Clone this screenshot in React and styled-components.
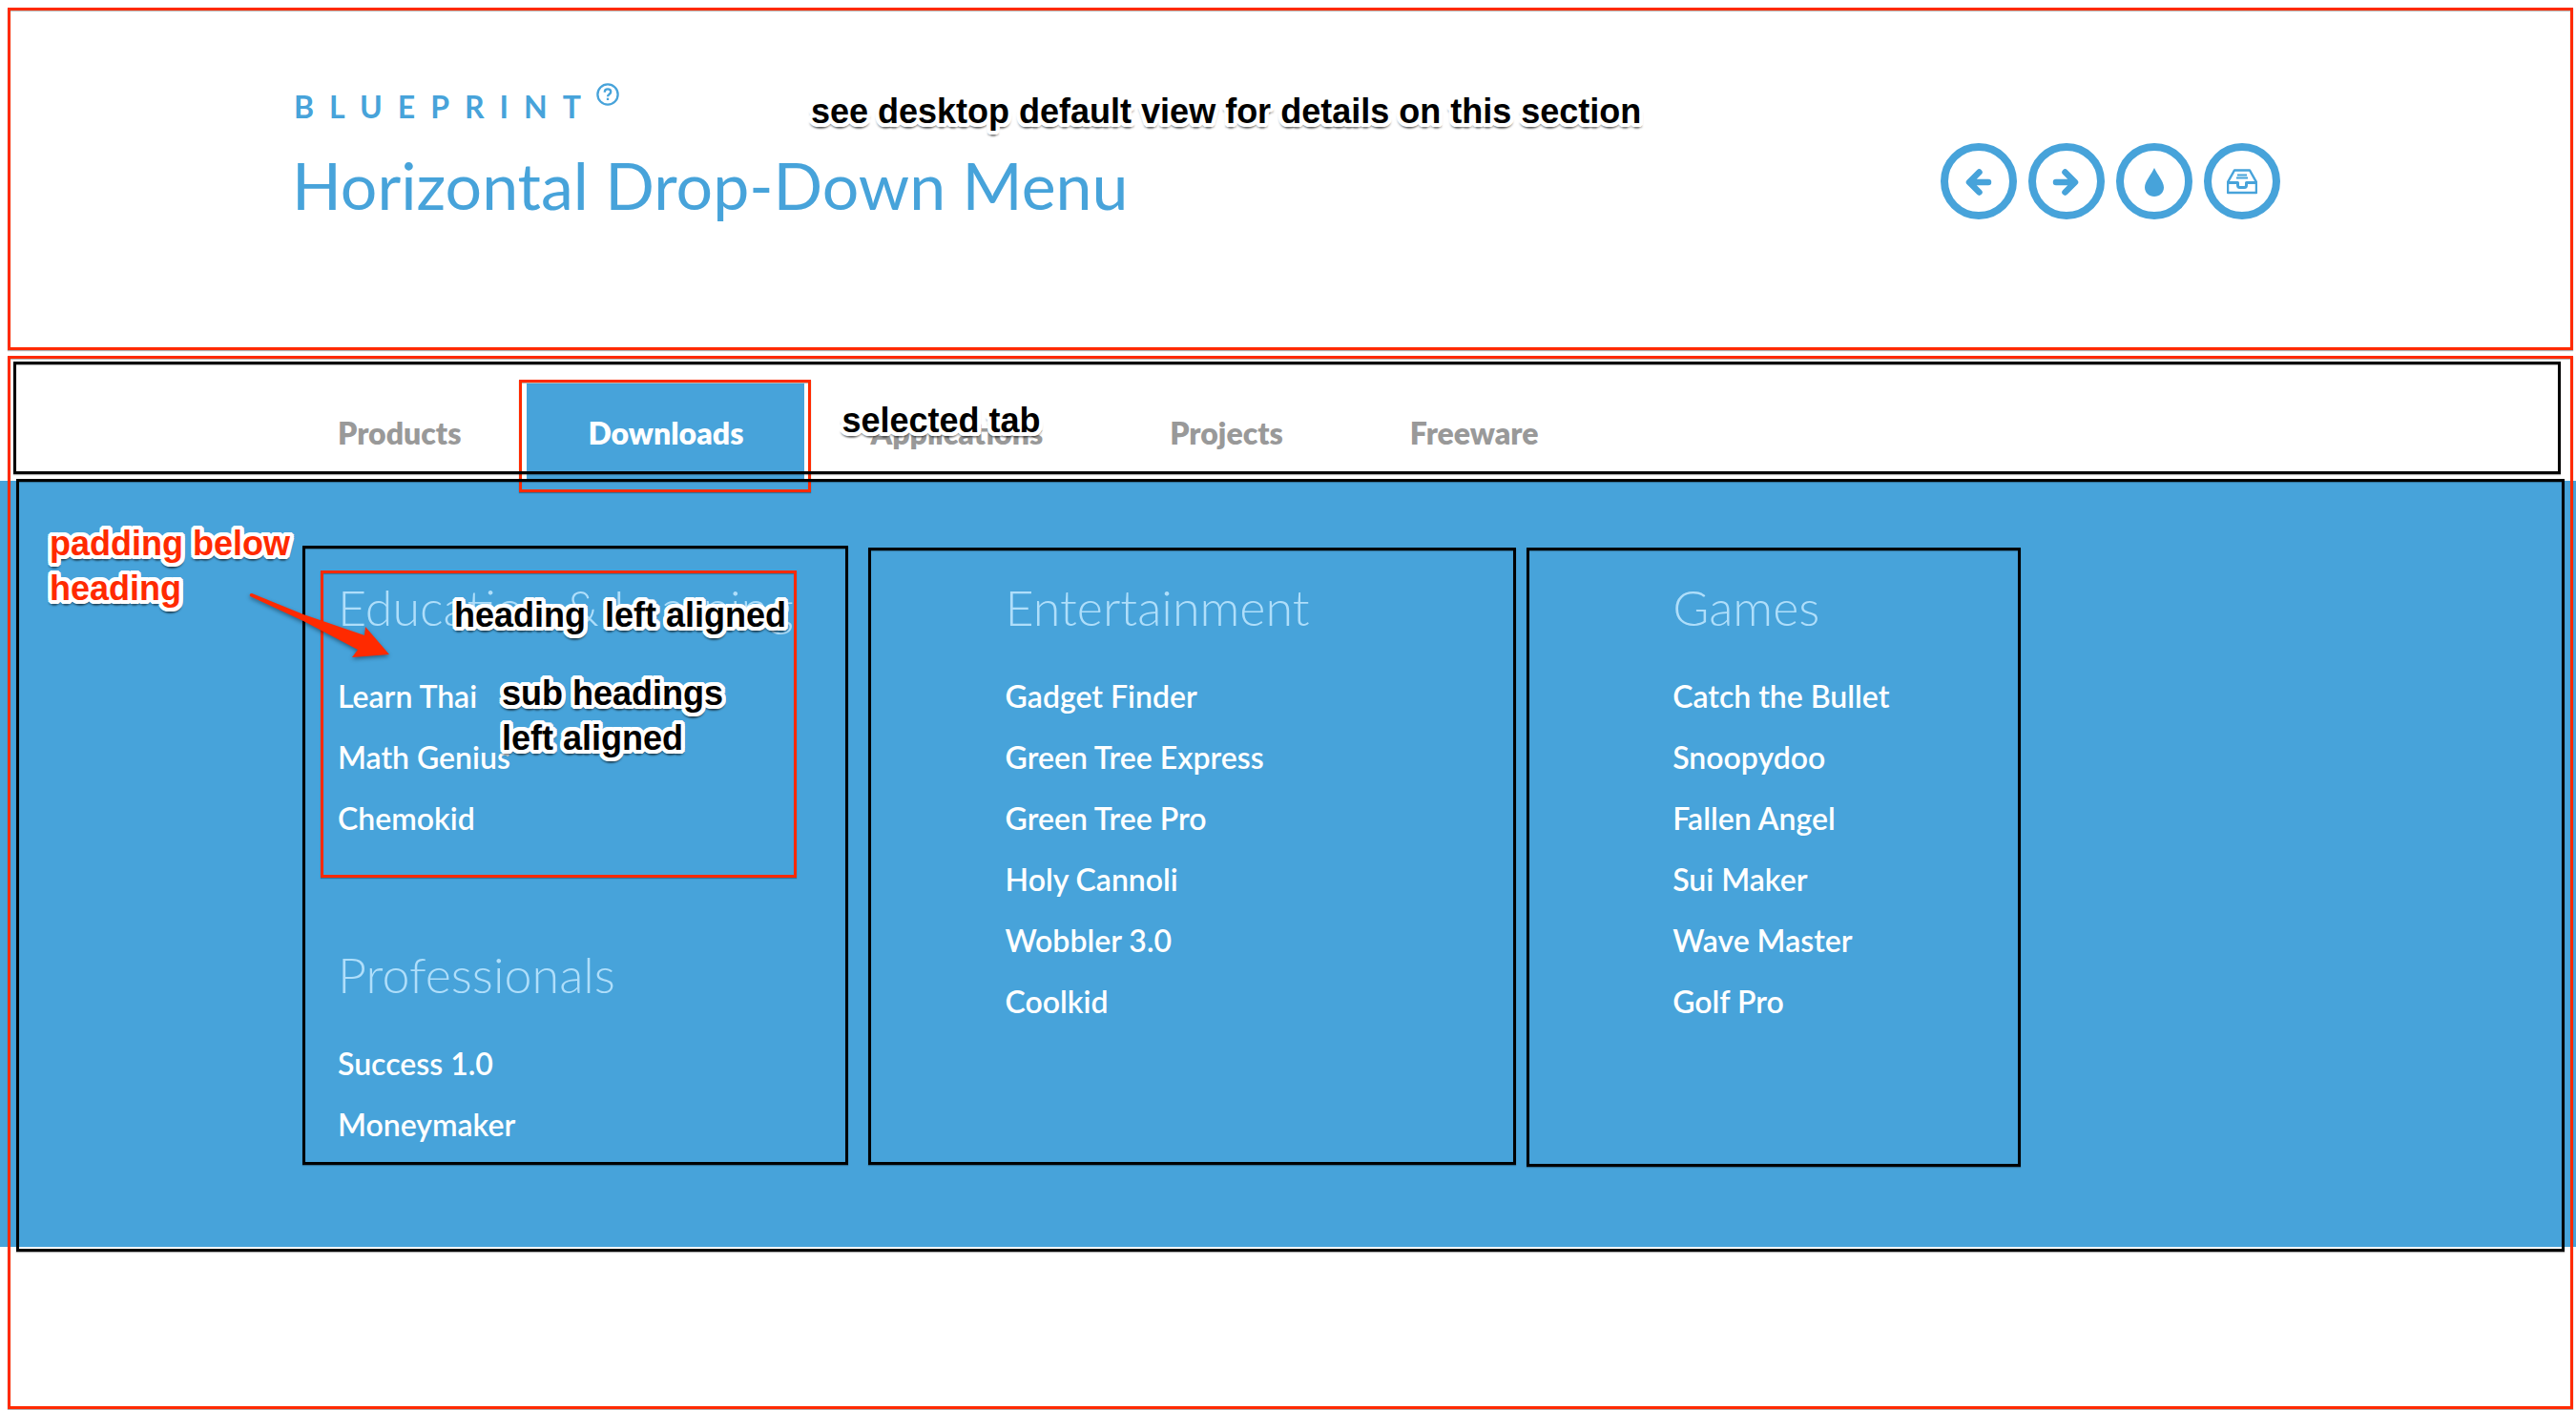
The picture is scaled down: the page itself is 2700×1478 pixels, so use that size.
import React from "react";
import styled, { createGlobalStyle, css } from "styled-components";

const BLUE = "#47a3da";
const RED = "#ff2a00";
const FONT = 'Lato, "Open Sans", sans-serif';

const GlobalStyle = createGlobalStyle`
  *, *::before, *::after { box-sizing: border-box; }
  body { margin: 0; background: #fff; font-family: ${FONT}; font-size: 32px; color: ${BLUE}; }
  ul { list-style: none; margin: 0; padding: 0; }
  a { color: inherit; text-decoration: none; }
`;

const Page = styled.div`
  overflow: hidden;
  min-height: 100vh;
  display: flex;
  flex-direction: column;
`;

/* Annotation layer: outlines and notes laid over the page content */
const Frame = styled.span`
  position: absolute;
  z-index: 1;
  pointer-events: none;
  inset: ${(p) => p.$inset};
  border: 3px solid ${(p) => (p.$red ? RED : "#000")};
  box-shadow: 0 1px 1px rgba(0, 0, 0, 0.3), inset 0 1px 1px rgba(0, 0, 0, 0.3);
`;

const outline = [
  [4, 0], [4, 2], [3, 3], [2, 4], [0, 4], [-2, 4], [-3, 3], [-4, 2],
  [-4, 0], [-4, -2], [-3, -3], [-2, -4], [0, -4], [2, -4], [3, -3], [4, -2],
]
  .map(([x, y]) => `${x}px ${y}px 0 #fff`)
  .join(", ");

const Note = styled.span`
  position: absolute;
  z-index: 2;
  left: ${(p) => p.$x}px;
  top: ${(p) => p.$y}px;
  pointer-events: none;
  font: bold 36px/47px "Liberation Sans", Arial, sans-serif;
  white-space: pre;
  color: ${(p) => (p.$red ? RED : "#000")};
  text-shadow: ${outline}, 3px 5px 2px rgba(0, 0, 0, 0.3), -3px 5px 2px rgba(0, 0, 0, 0.3), 0 6px 2px rgba(0, 0, 0, 0.4);
`;

const Arrow = styled.svg`
  position: absolute;
  z-index: 2;
  left: 254px;
  top: 112px;
  width: 170px;
  height: 90px;
  overflow: visible;
  pointer-events: none;
  filter: drop-shadow(0 2px 2px rgba(0, 0, 0, 0.4));
`;

const Header = styled.header`
  position: relative;
  padding: 84px 0 139px;
`;

const HeaderInner = styled.div`
  max-width: 2208px;
  margin: 0 auto;
  padding: 0 64px 0 60px;
  display: flex;
  justify-content: space-between;
  align-items: flex-end;
`;

const Brand = styled.p`
  margin: 0 0 14px;
  padding-left: 2px;
  display: flex;
  align-items: flex-start;
  font-weight: 700;
  line-height: 56px;
  letter-spacing: 16px;
  text-transform: uppercase;
`;

const HelpLink = styled.a`
  display: block;
  line-height: 0;
  svg { width: 24px; height: 24px; display: block; margin-top: 3px; }
`;

const Title = styled.h1`
  margin: 0;
  font-size: 68px;
  line-height: 80px;
  font-weight: 400;
`;

const Tools = styled.nav`
  display: flex;
  gap: 12px;
  padding-bottom: 4px;
`;

const Tool = styled.a`
  width: 80px;
  height: 80px;
  border: 8px solid ${BLUE};
  border-radius: 50%;
  display: grid;
  place-items: center;
  svg { width: 32px; height: 32px; }
`;

const MenuArea = styled.main`
  position: relative;
  flex: 1;
`;

const TabBar = styled.nav`
  position: relative;
  padding-top: 29px;
`;

const Tabs = styled.ul`
  max-width: 2240px;
  margin: 0 auto;
  padding: 0 60px;
  display: flex;
  gap: 5px;
  height: 102px;
`;

const Tab = styled.li`
  position: relative;
`;

const TabLink = styled.a`
  display: block;
  padding: 2px 64px 0;
  line-height: 100px;
  font-weight: 800;
  color: #999;
  ${(p) => p.$active && css`background: ${BLUE}; color: #fff;`}
`;

const Panel = styled.section`
  position: relative;
  background: ${BLUE};
`;

const Columns = styled.div`
  max-width: 2240px;
  margin: 0 auto;
  padding: 68px 60px 86px;
  display: grid;
  grid-template-columns: repeat(3, 33%);
`;

const Column = styled.div`
  position: relative;
  padding: 0 64px 10px;
`;

const Group = styled.div`
  position: relative;
  padding-top: 31px;
  & + & { padding-top: 98px; }
`;

const GroupTitle = styled.h2`
  margin: 0;
  padding-bottom: 29px;
  font-size: 52px;
  line-height: 66px;
  font-weight: 300;
  color: #afdefa;
`;

const GroupLink = styled.a`
  display: block;
  line-height: 64px;
  font-weight: 600;
  color: #fff;
`;

const tabs = ["Products", "Downloads", "Applications", "Projects", "Freeware"];

const columns = [
  {
    frame: "0 101px 0 27px",
    groups: [
      { title: "Education & Learning", items: ["Learn Thai", "Math Genius", "Chemokid"] },
      { title: "Professionals", items: ["Success 1.0", "Moneymaker"] },
    ],
  },
  {
    frame: "2px 100px 0 -80px",
    groups: [
      {
        title: "Entertainment",
        items: ["Gadget Finder", "Green Tree Express", "Green Tree Pro", "Holy Cannoli", "Wobbler 3.0", "Coolkid"],
      },
    ],
  },
  {
    frame: "2px 271px -2px -89px",
    groups: [
      {
        title: "Games",
        items: ["Catch the Bullet", "Snoopydoo", "Fallen Angel", "Sui Maker", "Wave Master", "Golf Pro"],
      },
    ],
  },
];

const toolIcons = [
  {
    label: "Previous demo",
    art: <path d="M26 17H8M16.500 6.500 6 17 16.500 27.500" fill="none" stroke={BLUE} strokeWidth="6.500" strokeLinecap="round" strokeLinejoin="round" />,
  },
  {
    label: "Next demo",
    art: <path d="M5 17h19M14.500 6.500 25 17 14.500 27.500" fill="none" stroke={BLUE} strokeWidth="6.500" strokeLinecap="round" strokeLinejoin="round" />,
  },
  {
    label: "Back to the article",
    art: <path d="M16 2C13 9 6 16 6 22.500 6 28 10.500 32 16 32s10-4 10-9.500C26 16 19 9 16 2Z" fill={BLUE} />,
  },
  {
    label: "Download archive",
    art: (
      <g fill="none" stroke={BLUE} strokeWidth="2.500" strokeLinejoin="round">
        <path d="M1 17 8 4.500h16L31 17v11H1Z" />
        <path d="M1 17.500h10.500V20q0 2.500 2 2.500h5q2 0 2-2.500v-2.500h10.500" strokeWidth="3" />
        <path d="M11 9.500h10M10 12.500h12" strokeWidth="2" />
      </g>
    ),
  },
];

function MenuGroup({ title, items, children }) {
  return (
    <Group>
      <GroupTitle>{title}</GroupTitle>
      <ul>
        {items.map((item) => (
          <li key={item}><GroupLink href="#">{item}</GroupLink></li>
        ))}
      </ul>
      {children}
    </Group>
  );
}

export default function App() {
  return (
    <Page>
      <GlobalStyle />
      <Header>
        <HeaderInner>
          <div>
            <Brand>
              Blueprint
              <HelpLink href="#" aria-label="About Blueprint">
                <svg viewBox="0 0 26 26" fill="none" stroke={BLUE} strokeWidth="2.500">
                  <circle cx="13" cy="13" r="11.500" />
                  <path d="M9.500 10.500q0-3.500 3.500-3.500t3.500 3q0 1.500-2 3-1.500 1-1.500 2.500" />
                  <path d="M13 17v2.500" />
                </svg>
              </HelpLink>
            </Brand>
            <Title>Horizontal Drop-Down Menu</Title>
          </div>
          <Tools aria-label="Demo links">
            {toolIcons.map((t) => (
              <Tool key={t.label} href="#" aria-label={t.label}>
                <svg viewBox="0 0 32 32">{t.art}</svg>
              </Tool>
            ))}
          </Tools>
        </HeaderInner>
        <Frame $red $inset="8px 3px 6px 8px" />
        <Note $x={850} $y={93}>see desktop default view for details on this section</Note>
      </Header>
      <MenuArea>
        <TabBar aria-label="Main menu">
          <Tabs>
            {tabs.map((tab) => (
              <Tab key={tab}>
                <TabLink href="#" $active={tab === "Downloads"}>{tab}</TabLink>
                {tab === "Downloads" && (
                  <>
                    <Frame $red $inset="-4px -7px -12px -8px" />
                    <Note $x={330} $y={15}>selected tab</Note>
                  </>
                )}
              </Tab>
            ))}
          </Tabs>
          <Frame $inset="6px 16px 7px 14px" />
        </TabBar>
        <Panel>
          <Columns>
            {columns.map((col, c) => (
              <Column key={c}>
                {col.groups.map((g, i) => (
                  <MenuGroup key={g.title} {...g}>
                    {c === 0 && i === 0 && (
                      <>
                        <Frame $red $inset="26px 91px -30px -18px" />
                        <Note $x={122} $y={49}>heading  left aligned</Note>
                        <Note $x={172} $y={131}>{"sub headings\nleft aligned"}</Note>
                      </>
                    )}
                  </MenuGroup>
                ))}
                <Frame $inset={col.frame} />
              </Column>
            ))}
          </Columns>
          <Frame $inset="-2px 12px -5px 17px" />
          <Note $red $x={52} $y={42}>{"padding below\nheading"}</Note>
          <Arrow viewBox="0 0 170 90" aria-hidden="true">
            <path d="M8 9Q7 6 10 6L64 28 128 50 129 41 154 70 115 73 121 65 64 35Z" fill={RED} />
          </Arrow>
        </Panel>
        <Frame $red $inset="0 3px 1px 8px" />
      </MenuArea>
    </Page>
  );
}
